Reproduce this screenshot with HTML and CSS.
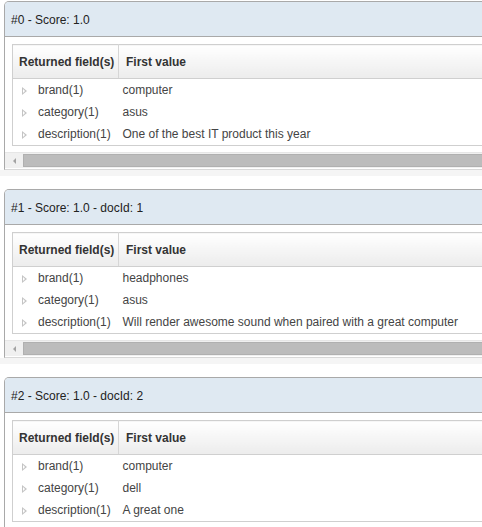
FILE: index.html
```html
<!DOCTYPE html>
<html>
<head>
<meta charset="utf-8">
<link rel="stylesheet" href="styles.css">
</head>
<body>
<div class="results">

  <section class="result">
    <div class="panel">
      <div class="panel-title">#0 - Score: 1.0</div>
      <div class="panel-body">
        <table class="fields">
          <thead><tr><th class="c1">Returned field(s)</th><th class="c2">First value</th></tr></thead>
          <tbody>
            <tr><td class="c1"><span class="tri"></span>brand(1)</td><td>computer</td></tr>
            <tr><td class="c1"><span class="tri"></span>category(1)</td><td>asus</td></tr>
            <tr><td class="c1"><span class="tri"></span>description(1)</td><td>One of the best IT product this year</td></tr>
          </tbody>
        </table>
      </div>
      <div class="hscroll"><span class="arrow"></span><span class="thumb"></span></div>
    </div>
    <div class="band"></div>
  </section>

  <section class="result">
    <div class="panel">
      <div class="panel-title">#1 - Score: 1.0 - docId: 1</div>
      <div class="panel-body">
        <table class="fields">
          <thead><tr><th class="c1">Returned field(s)</th><th class="c2">First value</th></tr></thead>
          <tbody>
            <tr><td class="c1"><span class="tri"></span>brand(1)</td><td>headphones</td></tr>
            <tr><td class="c1"><span class="tri"></span>category(1)</td><td>asus</td></tr>
            <tr><td class="c1"><span class="tri"></span>description(1)</td><td>Will render awesome sound when paired with a great computer</td></tr>
          </tbody>
        </table>
      </div>
      <div class="hscroll"><span class="arrow"></span><span class="thumb"></span></div>
    </div>
    <div class="band"></div>
  </section>

  <section class="result">
    <div class="panel">
      <div class="panel-title">#2 - Score: 1.0 - docId: 2</div>
      <div class="panel-body">
        <table class="fields">
          <thead><tr><th class="c1">Returned field(s)</th><th class="c2">First value</th></tr></thead>
          <tbody>
            <tr><td class="c1"><span class="tri"></span>brand(1)</td><td>computer</td></tr>
            <tr><td class="c1"><span class="tri"></span>category(1)</td><td>dell</td></tr>
            <tr><td class="c1"><span class="tri"></span>description(1)</td><td>A great one</td></tr>
          </tbody>
        </table>
      </div>
      <div class="hscroll"><span class="arrow"></span><span class="thumb"></span></div>
    </div>
    <div class="band"></div>
  </section>

</div>
</body>
</html>
```

FILE: styles.css
```css
html, body {
  margin: 0;
  padding: 0;
  background: #ffffff;
  overflow: hidden;
}
body {
  font-family: "Liberation Sans", Arial, sans-serif;
  font-size: 12px;
  color: #333;
}
.results {
  padding-top: 1px;
  width: 640px;
}
.result {
  margin-bottom: 13px;
}
.panel {
  margin-left: 4px;
  border: 1px solid #a9a9a9;
  border-bottom-color: #d8d8d8;
  border-radius: 5px 5px 0 0;
  background: #fff;
}
.panel-title {
  height: 33px;
  padding-top: 1px;
  line-height: 34px;
  padding-left: 6px;
  background: #dfe9f2;
  border-bottom: 1px solid #a9a9a9;
  border-radius: 4px 4px 0 0;
  color: #222;
  white-space: nowrap;
}
.panel-body {
  padding: 7px 7px 6px 7px;
}
.fields {
  border-collapse: collapse;
  table-layout: fixed;
  width: 100%;
  border: 1px solid #cfcfcf;
}
.fields th {
  height: 33px;
  padding: 0 6px;
  text-align: left;
  font-weight: bold;
  color: #333;
  white-space: nowrap;
  overflow: hidden;
  background: linear-gradient(#ffffff, #ececec);
  border-bottom: 1px solid #cfcfcf;
}
.fields th.c1 {
  width: 106px;
  padding: 0 0 0 6px;
  box-sizing: border-box;
  border-right: 1px solid #d6d6d6;
}
.fields th.c2 {
  padding-left: 7px;
}
.fields td {
  height: 22px;
  padding: 0 4px;
  color: #444;
  white-space: nowrap;
}
.fields td.c1 {
  padding-left: 9px;
}
.tri {
  display: inline-block;
  width: 0;
  height: 0;
  border-top: 4px solid transparent;
  border-bottom: 4px solid transparent;
  border-left: 5px solid #c4c4c4;
  margin-right: 11px;
  position: relative;
  vertical-align: -1px;
}
.tri::after {
  content: "";
  position: absolute;
  left: -4px;
  top: -2px;
  border-top: 2px solid transparent;
  border-bottom: 2px solid transparent;
  border-left: 2.5px solid #fff;
}
.hscroll {
  height: 15px;
  margin: 0 0 1px 0;
  background: #f0f0f0;
  border-top: 1px solid #e6e6e6;
  display: flex;
  align-items: center;
}
.arrow {
  width: 0;
  height: 0;
  margin-left: 8px;
  border-top: 3px solid transparent;
  border-bottom: 3px solid transparent;
  border-right: 3px solid #a3a3a3;
}
.thumb {
  margin-left: 7px;
  flex: 1;
  height: 11px;
  background: #bcbcbc;
  border: 1px solid #b0b0b0;
}
.band {
  height: 6px;
  background: #f5f5f5;
}
```
